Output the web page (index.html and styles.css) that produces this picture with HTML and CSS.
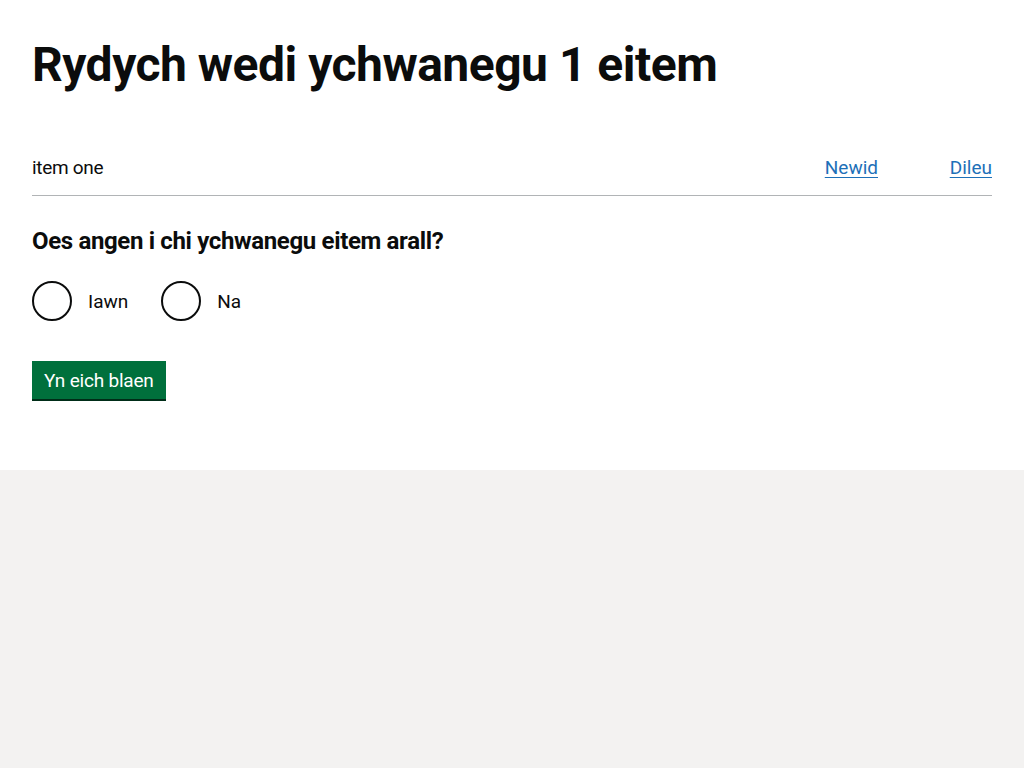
FILE: index.html
```html
<!DOCTYPE html>
<html lang="cy">
<head>
<meta charset="utf-8">
<title>Rydych wedi ychwanegu 1 eitem</title>
<link rel="stylesheet" href="styles.css">
</head>
<body>
<main class="main">
  <h1 class="heading-xl">Rydych wedi ychwanegu 1 eitem</h1>
  <dl class="summary-list">
    <div class="summary-row">
      <dt class="summary-key">item one</dt>
      <dd class="summary-action summary-action-change"><a href="#" class="link">Newid</a></dd>
      <dd class="summary-action summary-action-remove"><a href="#" class="link">Dileu</a></dd>
    </div>
  </dl>
  <form class="form">
    <fieldset class="fieldset">
      <legend class="legend">Oes angen i chi ychwanegu eitem arall?</legend>
      <div class="radios">
        <label class="radio-item">
          <input type="radio" name="add" class="radio-input">
          <span class="radio-circle"></span>
          <span class="radio-label">Iawn</span>
        </label>
        <label class="radio-item">
          <input type="radio" name="add" class="radio-input">
          <span class="radio-circle"></span>
          <span class="radio-label">Na</span>
        </label>
      </div>
    </fieldset>
    <button type="button" class="button">Yn eich blaen</button>
  </form>
</main>
</body>
</html>
```

FILE: styles.css
```css
html, body {
  margin: 0;
  padding: 0;
}
body {
  background: #f3f2f1;
  color: #0b0c0c;
  font-family: Roboto, "Noto Sans", sans-serif;
  min-height: 768px;
}
.main {
  background: #ffffff;
  padding: 40px 32px 71px;
}
.heading-xl {
  margin: 0 0 50px;
  font-size: 48px;
  line-height: 50px;
  font-weight: 700;
  letter-spacing: -0.5px;
}
.summary-list {
  margin: 0 0 30px;
}
.summary-row {
  display: flex;
  align-items: baseline;
  border-bottom: 1px solid #b1b4b6;
  padding: 15px 0 15px;
  font-size: 19px;
  line-height: 25px;
}
.summary-key {
  flex: 1;
  margin: 0;
  letter-spacing: -0.3px;
}
.summary-action {
  margin: 0;
  text-align: right;
}
.summary-action-change {
  width: 120px;
}
.summary-action-remove {
  width: 114px;
}
.link {
  color: #1d70b8;
  text-decoration: underline;
  text-underline-offset: 3px;
  text-decoration-thickness: 1px;
}
.form {
  margin: 0;
}
.fieldset {
  margin: 0;
  padding: 0;
  border: 0;
}
.legend {
  padding: 0;
  font-size: 24px;
  line-height: 30px;
  font-weight: 700;
  margin-bottom: 25px;
  letter-spacing: -0.35px;
}
.radios {
  display: flex;
  gap: 20px;
  margin-bottom: 40px;
}
.radio-item {
  display: flex;
  align-items: center;
  height: 40px;
  cursor: pointer;
}
.radio-input {
  position: absolute;
  opacity: 0;
  width: 0;
  height: 0;
  margin: 0;
}
.radio-circle {
  box-sizing: border-box;
  width: 40px;
  height: 40px;
  border: 2px solid #0b0c0c;
  border-radius: 50%;
  flex: none;
}
.radio-label {
  font-size: 19px;
  line-height: 25px;
  padding: 0 13px 0 16px;
}
.button {
  display: block;
  background: #00703c;
  color: #ffffff;
  border: 2px solid transparent;
  border-radius: 0;
  box-shadow: 0 2px 0 #002d18;
  font-family: Roboto, "Noto Sans", sans-serif;
  font-size: 19px;
  line-height: 19px;
  letter-spacing: -0.2px;
  padding: 8px 10px 7px;
  margin: 0;
  cursor: pointer;
}
```
